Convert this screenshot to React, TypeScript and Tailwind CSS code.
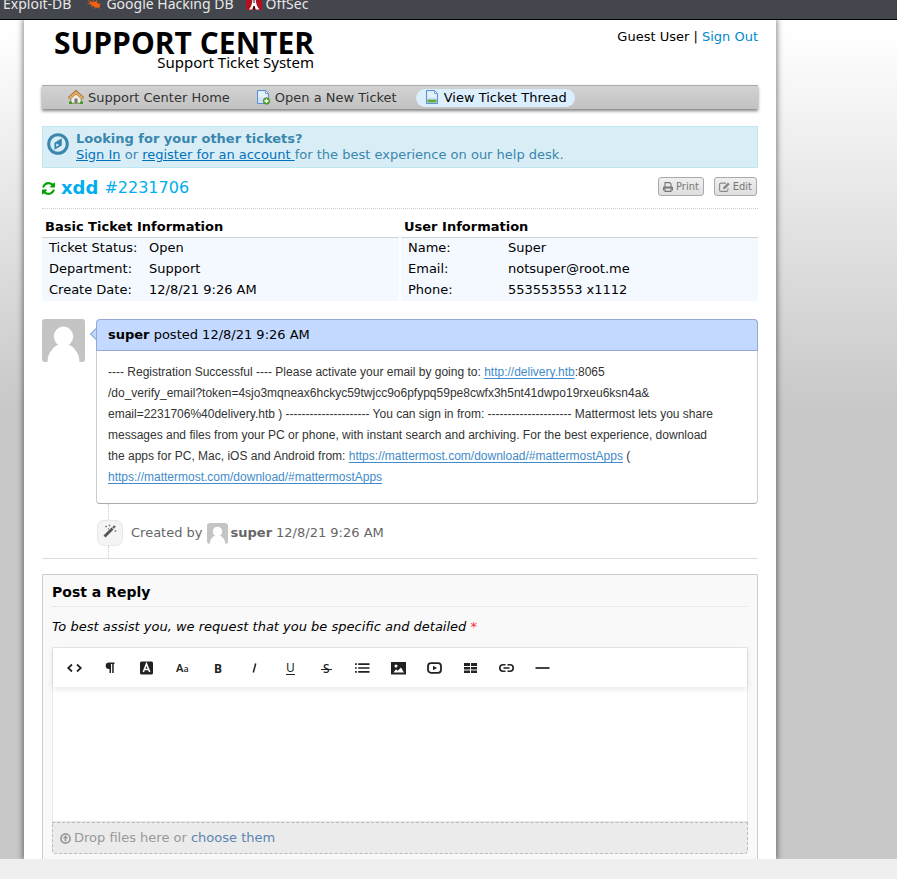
import React from "react";

const dejavu = "font-['DejaVu_Sans',Verdana,sans-serif]";
const noto = "font-['Noto_Sans',sans-serif]";
const openSans = "font-['Open_Sans','Noto_Sans',sans-serif]";
const helvetica = "font-['Liberation_Sans',Arial,sans-serif]";

function BugIcon() {
  return (
    <svg className="mt-[3px] h-[14px] w-[15px]" viewBox="0 0 16 14" aria-hidden="true">
      <path d="M3.500 3.500 6 5 9 4 13.500 7.500 14 10.500 10 11 6 9 3 6z" fill="#f0620f" />
      <path d="M1 3.500 4 4.500M0.500 6.500 5 7M4 9.500 7 8.500M6 2 7 4.500M10.500 3 10 5M15 6.500 12 8M8 12 9 10M13 12 11 10" stroke="#f0620f" strokeWidth=".9" />
    </svg>
  );
}

function OffSecIcon() {
  return (
    <svg className="h-4 w-4" viewBox="0 0 16 16" aria-hidden="true">
      <path d="M0 0h16v16H0z" fill="#b0111f" />
      <path d="M6.600 0h2.800l.5 8 1.100 4 2.400 3.500H9.800L8.600 12H7.400l-1.200 3.500H3L5.200 12l1-4z" fill="#fff" />
      <path d="M7.500 1h1v8h-1zM7 12.500h2v3H7z" fill="#35060a" />
    </svg>
  );
}

function HouseIcon() {
  return (
    <svg className="h-4 w-4" viewBox="0 0 16 16" aria-hidden="true">
      <path d="M2 10.500h12V15H2z" fill="#6fae3c" />
      <path d="M3 8 8 3.500 13 8v6H3z" fill="#f1eee6" stroke="#999" strokeWidth=".6" />
      <path d="M1 9.500 8 3 15 9.500" fill="none" stroke="#9a6a2f" strokeWidth="3.200" />
      <path d="M1.300 9.500 8 3.200 14.700 9.500" fill="none" stroke="#e9b063" strokeWidth="1.900" />
      <path d="M6.500 9.500h3V14h-3z" fill="#777" />
      <path d="M1 12.500h3V15H1zM12 12.500h3V15h-3z" fill="#4c9a2c" />
    </svg>
  );
}

function PageIcon({ kind }: { kind: "new" | "view" }) {
  return (
    <svg className="h-4 w-4" viewBox="0 0 16 16" aria-hidden="true">
      <path d="M2.500 1.500h8l3 3v10h-11z" fill="#cfe3fa" stroke="#5f8fd0" />
      <path d="M3.500 2.500h6.500v3h2.500v3h-9z" fill="#f0f7ff" opacity=".7" />
      <path d="M10.500 1.500v3h3z" fill="#fff" stroke="#5f8fd0" strokeWidth=".8" />
      {kind === "view" ? (
        <path d="M3.500 10.500h9v3h-9z" fill="#62ad3c" />
      ) : (
        <g>
          <circle cx="11.500" cy="12" r="3.300" fill="#5aa532" stroke="#3f8120" strokeWidth=".6" />
          <path d="M11.500 10v4M9.500 12h4" stroke="#fff" strokeWidth="1.300" />
        </g>
      )}
    </svg>
  );
}

function CompassIcon() {
  return (
    <svg className="h-[22px] w-[22px] shrink-0" viewBox="0 0 22 22" aria-hidden="true">
      <circle cx="11" cy="11" r="9.300" fill="none" stroke="#3a87ad" strokeWidth="3" />
      <path fillRule="evenodd" d="M14.800 5.200v7.400L7.400 16.800v-7zM9.200 10.600v3.200l3-1.700z" fill="#3a87ad" />
    </svg>
  );
}

function RefreshIcon() {
  return (
    <svg className="h-[13px] w-[13px]" viewBox="0 0 1536 1536" fill="#00a300" aria-hidden="true">
      <path d="M1511 928q0 5-1 7-64 268-268 434.500t-478 166.500q-146 0-282.500-55t-243.500-157l-129 129q-19 19-45 19t-45-19-19-45v-448q0-26 19-45t45-19h448q26 0 45 19t19 45-19 45l-137 137q71 66 161 102t187 36q134 0 250-65t186-179q11-17 53-117 8-23 30-23h192q13 0 22.500 9.500t9.500 22.500zm25-800v448q0 26-19 45t-45 19h-448q-26 0-45-19t-19-45 19-45l138-138q-148-137-349-137-134 0-250 65t-186 179q-11 17-53 117-8 23-30 23h-199q-13 0-22.500-9.500t-9.500-22.500v-7q65-268 270-434.500t480-166.500q146 0 284 55.500t245 156.500l130-129q19-19 45-19t45 19 19 45z" />
    </svg>
  );
}

function PrintIcon() {
  return (
    <svg className="h-[10px] w-[10px]" viewBox="0 0 10 10" aria-hidden="true">
      <path d="M2 5V.6h4.600L8 2v3M2 6.500v2.900h6V6.500" fill="none" stroke="#777" strokeWidth="1.100" />
      <path d="M1 4.500h8a1 1 0 0 1 1 1v3H8.500v-2h-7v2H0v-3a1 1 0 0 1 1-1z" fill="#777" />
    </svg>
  );
}

function EditIcon() {
  return (
    <svg className="h-[10px] w-[11px]" viewBox="0 0 11 10" aria-hidden="true">
      <path d="M7 1.100H2A1.400 1.400 0 0 0 .6 2.500V8A1.400 1.400 0 0 0 2 9.400h5.500A1.400 1.400 0 0 0 8.900 8V6.300" fill="none" stroke="#888" strokeWidth="1.100" />
      <path d="M9 .5 10.700 2.200 6 7H4.200V5.300z" fill="#888" />
    </svg>
  );
}

function WandIcon() {
  return (
    <svg className="mb-1 h-[14px] w-[14px]" viewBox="0 0 14 14" aria-hidden="true">
      <path d="M1.500 12.500 9.500 4.500" stroke="#555" strokeWidth="2.800" />
      <path d="M10 4 12 2" stroke="#666" strokeWidth="2.400" />
      <path d="M3 1.500v2M2 2.500h2M6.500 .5v2M5.500 1.500h2M12.500 6v2M11.500 7h2M5.500 4v1.400" stroke="#888" strokeWidth=".9" />
    </svg>
  );
}

function UploadIcon() {
  return (
    <svg className="h-[11px] w-[11px]" viewBox="0 0 11 11" aria-hidden="true">
      <circle cx="5.500" cy="5.500" r="4.600" fill="none" stroke="#999" strokeWidth="1.700" />
      <path d="M5.500 2.300 8.300 5.300H6.400V8.300H4.600V5.300H2.700z" fill="#999" />
    </svg>
  );
}

function Avatar({ size }: { size: string }) {
  return (
    <svg className={`${size} block shrink-0 rounded-[3px]`} viewBox="0 0 43 43" role="img" aria-label="Avatar">
      <path d="M0 0h43v43H0z" fill="#c4c4c4" />
      <ellipse cx="21.500" cy="17.500" rx="9.700" ry="10" fill="#fff" />
      <path d="M5.500 43c0-9 6-15.500 11-17.500h10c5 2 11 8.500 11 17.500z" fill="#fff" />
    </svg>
  );
}

const ink = "#222";
const tools: { label: string; icon: React.ReactNode }[] = [
  { label: "HTML", icon: <path d="M6 4.500 2.200 8 6 11.500M11 4.500 14.800 8 11 11.500" fill="none" stroke={ink} strokeWidth="1.700" /> },
  { label: "Format", icon: <path d="M12.500 2.500H7a3.300 3.300 0 0 0 0 6.600h.5V13H9V4h1.200v9h1.500V4h.8z" fill={ink} /> },
  {
    label: "Text color",
    icon: (
      <g>
        <rect x="2" y="1.500" width="13" height="13" rx="1.500" fill={ink} />
        <path d="M5.300 12 8.500 4l3.200 8M6.500 9.500h4" fill="none" stroke="#fff" strokeWidth="1.600" />
      </g>
    ),
  },
  { label: "Font size", icon: <text x="2" y="12" fontSize="11" fontWeight="600" fill={ink}>A<tspan fontSize="9" fontWeight="500">a</tspan></text> },
  { label: "Bold", icon: <text x="4" y="12.500" fontSize="12" fontWeight="700" fill={ink}>B</text> },
  { label: "Italic", icon: <path d="M9.700 3.500 7.300 12.500" stroke={ink} strokeWidth="1.500" /> },
  { label: "Underline", icon: <g><text x="4" y="11.500" fontSize="12" fill={ink}>U</text><path d="M4 14.500h9" stroke={ink} /></g> },
  { label: "Strikethrough", icon: <g><text x="5" y="12.500" fontSize="12" fontWeight="500" fill={ink}>S</text><path d="M3 9.500h11" stroke={ink} /></g> },
  { label: "Lists", icon: <path d="M1 4.200h1.800M1 8h1.800M1 11.800h1.800M4.200 4.200H15.500M4.200 8H15.500M4.200 11.800H15.500" stroke={ink} strokeWidth="1.700" /> },
  {
    label: "Image",
    icon: (
      <g>
        <path d="M1 2h15v12.500H1z" fill={ink} />
        <circle cx="6" cy="6" r="1.500" fill="#fff" />
        <path d="M3.500 12.500 6 9.200l1.700 1.500L11 7.500l3 5z" fill="#fff" />
      </g>
    ),
  },
  {
    label: "Video",
    icon: (
      <g>
        <rect x="2" y="3.200" width="13" height="9.600" rx="3" fill="none" stroke={ink} strokeWidth="1.800" />
        <path d="M7 5.700 11 8l-4 2.300z" fill={ink} />
      </g>
    ),
  },
  { label: "Table", icon: <path d="M2 3h6v3H2zM9 3h6v3H9zM2 7h6v2.500H2zM9 7h6v2.500H9zM2 10.500h6v2.500H2zM9 10.500h6v2.500H9z" fill={ink} /> },
  { label: "Link", icon: <path d="M7.500 4.800H5a3.200 3.200 0 0 0 0 6.400h2.500M9.500 4.800H12a3.200 3.200 0 0 1 0 6.400H9.500M5.500 8h6" fill="none" stroke={ink} strokeWidth="1.600" /> },
  { label: "Line", icon: <path d="M1.500 8h14" stroke={ink} strokeWidth="1.700" /> },
];

function InfoTable({ title, rows }: { title: string; rows: [string, string][] }) {
  return (
    <table className="flex-1 border-collapse text-left">
      <thead>
        <tr>
          <th colSpan={2} className="border-b border-[#ccd3d8] px-[3px] pb-[1px] leading-[18px] font-bold">{title}</th>
        </tr>
      </thead>
      <tbody className="bg-[#f4f9ff]">
        {rows.map(([name, value]) => (
          <tr key={name} className="leading-5">
            <th scope="row" className="w-[100px] pb-px pl-[7px] font-normal">{name}</th>
            <td className="pb-px pl-[7px]">{value}</td>
          </tr>
        ))}
      </tbody>
    </table>
  );
}

export default function App() {
  const link = "text-[#428bca] underline underline-offset-2";
  return (
    <div className={`${dejavu} flex min-h-screen flex-col bg-[#efefef] text-[13px] text-black`}>
      <nav aria-label="Bookmarks" className={`${noto} flex h-5 items-end overflow-hidden border-b border-black bg-[#43464d] text-[14px] leading-5 text-[#e8e8e8]`}>
        <a href="#" className="mb-[5px] ml-[3px]">Exploit-DB</a>
        <a href="#" className="mb-[5px] ml-4 flex gap-1"><BugIcon />Google Hacking DB</a>
        <a href="#" className="mb-[5px] ml-3 flex gap-1"><OffSecIcon />OffSec</a>
      </nav>

      <div className="overflow-hidden bg-[#c8c8c8] bg-[linear-gradient(#fff_10px,#c8c8c8_390px)]">
        <div className="ml-6 w-full max-w-[752px] bg-white px-[18px] shadow-[0_0_6px_1px_rgba(0,0,0,0.5)]">
          <header className="flex justify-between pb-[15px]">
            <a href="#" className={`${openSans} ml-3 flex flex-col items-end pt-[11px]`}>
              <span className="text-[30px] leading-6 font-bold">SUPPORT CENTER</span>
              <span className={`${noto} text-[15px] leading-[15px]`}>Support Ticket System</span>
            </a>
            <p className="pt-[7px] leading-5">
              Guest User | <a href="#" className="text-[#0088cc]">Sign Out</a>
            </p>
          </header>

          <nav className="flex h-6 items-center border-t border-[#aaa] bg-linear-to-b from-[#d2d2d2] to-[#c2c2c2] pl-[18px] leading-[18px] text-[#333] shadow-[0_2px_3px_rgba(0,0,0,0.5)]">
            <a href="#" className="flex gap-1 px-2"><HouseIcon />Support Center Home</a>
            <a href="#" className="ml-[9px] flex gap-1 px-2"><PageIcon kind="new" />Open a New Ticket</a>
            <a href="#" className="ml-[11px] flex gap-1 rounded-full bg-[#dbefff] px-2 text-black"><PageIcon kind="view" />View Ticket Thread</a>
          </nav>

          <section className="mt-[17px] flex gap-[7px] border border-[#bce8f1] bg-[#d9edf7] px-1 py-1 leading-4 text-[#3a87ad]">
            <div className="pt-[2px]"><CompassIcon /></div>
            <div>
              <p className="font-bold">Looking for your other tickets?</p>
              <p>
                <a href="#" className="text-[#0072bc] underline">Sign In</a> or{" "}
                <a href="#" className="text-[#0072bc] underline">register for an account </a>for the best experience on our help desk.
              </p>
            </div>
          </section>

          <div className="flex items-start justify-between border-b border-dotted border-[#ccc] pt-[9px] pb-[9px]">
            <h1 className="flex items-center text-[16px] leading-[22px] text-[#00aeef]">
              <a href="#" aria-label="Reload"><RefreshIcon /></a>
              <b className="ml-[6px] text-[18px]">xdd</b>
              <span className="ml-[6px]">#2231706</span>
            </h1>
            <div className="flex gap-[10px] pr-px font-['DejaVu_Sans_Condensed','DejaVu_Sans',sans-serif] text-[11px] leading-[17px] text-[#777]">
              <button className="flex items-center gap-[3px] rounded-[3px] border border-[#aaa] bg-linear-to-b from-[#efefef] to-[#dfdfdf] px-1"><PrintIcon />Print</button>
              <button className="flex items-center gap-[3px] rounded-[3px] border border-[#aaa] bg-linear-to-b from-[#efefef] to-[#dfdfdf] px-1"><EditIcon />Edit</button>
            </div>
          </div>

          <div className="mt-[9px] flex gap-[2px]">
            <InfoTable title="Basic Ticket Information" rows={[["Ticket Status:", "Open"], ["Department:", "Support"], ["Create Date:", "12/8/21 9:26 AM"]]} />
            <InfoTable title="User Information" rows={[["Name:", "Super"], ["Email:", "notsuper@root.me"], ["Phone:", "553553553 x1112"]]} />
          </div>

          <article className="mt-[18px] flex items-start gap-[11px]">
            <Avatar size="h-[43px] w-[43px]" />
            <div className="relative min-w-0 flex-1 rounded-[4px] border border-[#ccc] border-b-[#aaa]">
              <span className="absolute top-[9px] -left-[5px] h-[10px] w-[10px] rotate-45 border-b border-l border-[#92a9d6] bg-[#c3d9ff]" />
              <div className="relative -mx-px -mt-px rounded-t-[4px] border border-[#92a9d6] bg-[#c3d9ff] px-[11px] py-[6px] leading-[18px]">
                <b>super</b> posted 12/8/21 9:26 AM
              </div>
              <p className={`${helvetica} px-[11px] pt-[11px] pb-[15px] text-[12px] leading-[21px] text-[#333]`}>
                ---- Registration Successful ---- Please activate your email by going to: <a href="#" className={link}>http://delivery.htb</a>:8065
                <br />/do_verify_email?token=4sjo3mqneax6hckyc59twjcc9o6pfypq59pe8cwfx3h5nt41dwpo19rxeu6ksn4a&amp;
                <br />email=2231706%40delivery.htb ) --------------------- You can sign in from: --------------------- Mattermost lets you share
                <br />messages and files from your PC or phone, with instant search and archiving. For the best experience, download
                <br />the apps for PC, Mac, iOS and Android from: <a href="#" className={link}>https://mattermost.com/download/#mattermostApps</a> (
                <br /><a href="#" className={link}>https://mattermost.com/download/#mattermostApps</a>
              </p>
            </div>
          </article>

          <div className="border-b border-[#ddd] pl-[55px] text-[#666]">
            <div className="ml-[11px] h-4 border-l border-dotted border-[#ccc]" />
            <div className="flex items-center">
              <span className="flex h-[26px] w-[26px] items-center justify-center rounded-[7px] border border-[#e8e8e8] bg-[#f4f4f4]"><WandIcon /></span>
              <span className="mr-1 ml-2">Created by</span>
              <Avatar size="h-[21px] w-[21px]" />
              <b className="mr-1 ml-[3px]">super</b> 12/8/21 9:26 AM
            </div>
            <div className="ml-[11px] h-3 border-l border-dotted border-[#ccc]" />
          </div>

          <form className="mt-[15px] border border-b-0 border-[#ccc] bg-[#f9f9f9] px-[9px] pb-[5px]">
            <h2 className="border-b border-dotted border-[#ddd] pt-2 pb-[5px] text-[14px] leading-[18px] font-bold">Post a Reply</h2>
            <label htmlFor="reply" className="mt-[11px] block leading-[18px]">
              <em>To best assist you, we request that you be specific and detailed</em> <span className="text-red-500">*</span>
            </label>
            <div className="mt-[11px] border border-[#e8e8e8] bg-white">
              <div role="toolbar" aria-label="Formatting" className="flex h-[39px] items-center gap-[10px] px-2 shadow-[0_2px_6px_rgba(0,0,0,0.1)]">
                {tools.map((tool) => (
                  <button type="button" key={tool.label} aria-label={tool.label} className="flex w-[26px] justify-center">
                    <svg className={`${noto} h-4 w-[17px]`} viewBox="0 0 17 16" aria-hidden="true">{tool.icon}</svg>
                  </button>
                ))}
              </div>
              <textarea id="reply" className="block h-[134px] w-full resize-none bg-transparent p-3 outline-none" />
            </div>
            <div className="flex items-center gap-[3px] rounded-b-[4px] border border-dashed border-[#bbb] bg-[#ebebeb] px-[7px] leading-[30px] text-[#999]">
              <UploadIcon />
              <p>Drop files here or <a href="#" className="text-[#5b85b0]">choose them</a></p>
            </div>
          </form>
        </div>
      </div>
    </div>
  );
}
